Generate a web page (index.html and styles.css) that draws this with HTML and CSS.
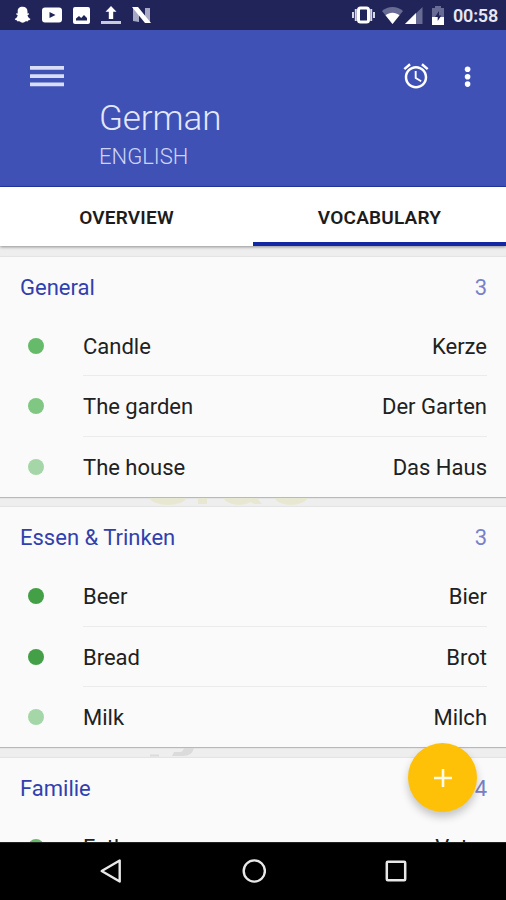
FILE: index.html
```html
<!DOCTYPE html>
<html lang="en">
<head>
<meta charset="utf-8">
<title>German vocabulary</title>
<link rel="stylesheet" href="styles.css">
</head>
<body>
<div class="screen">
  <header class="status">
    <div class="status-left">
      <svg width="17" height="18" viewBox="0 0 17 18"><path fill="#fff" d="M8.500.8c3.200 0 5 2 5 4.700v2l1.300-.2.300 1-1.600 1c.5 1.900 1.200 2.900 3 3.600-.3.900-1.300 1.100-2.200 1.300l-.5 1.200c-1.900-.3-2.400.1-3.500.9-1.100.6-2.300.6-3.400 0-1.100-.8-1.700-1.200-3.500-.9l-.5-1.200c-.9-.2-1.900-.4-2.200-1.300 1.800-.7 2.500-1.700 3-3.600l-1.600-1 .3-1 1.300.2v-2C3.500 2.800 5.300.8 8.500.8z"/></svg>
      <svg width="20" height="16" viewBox="0 0 20 16"><rect y=".5" width="20" height="15" rx="3" fill="#fff"/><path d="M7.500 5v6l6-3z" fill="#202458"/></svg>
      <svg width="17" height="17" viewBox="0 0 17 17"><rect width="17" height="17" rx="2" fill="#fff"/><path d="M3 13.500v-2L6 9l2.200 2L11 8l3 3v2.500z" fill="#202458"/></svg>
      <svg width="20" height="18" viewBox="0 0 20 18"><path d="M10 0l5.500 5.800h-3.300V13H7.800V5.800H4.500z" fill="#fff"/><path d="M0 15h20v3H0z" fill="#c8cade"/></svg>
      <svg width="19" height="16" viewBox="0 0 19 16"><path d="M1 1h6v14l-6-1zM13 1h5v14h-5z" fill="#a7a9c4"/><path d="M0 0h6l13 16h-6z" fill="#fff"/></svg>
    </div>
    <div class="status-right">
      <svg class="vibrate" width="23" height="18" viewBox="0 0 23 18"><rect x="6.500" y="2" width="10" height="14" rx="2" fill="none" stroke="#fff" stroke-width="3"/><path d="M3.800 3v12M19.200 3v12M1 6v6M22 6v6" stroke="#d7d8e6" stroke-width="2"/></svg>
      <svg class="wifi" width="21" height="17" viewBox="0 0 21 17"><path d="M0 4C6-1.300 15-1.300 21 4L10.500 17z" fill="#686b94"/><path d="M3.500 8.200c4-3.400 10-3.400 14 0L10.500 17z" fill="#fff"/></svg>
      <svg class="signal" width="18" height="17" viewBox="0 0 18 17"><path d="M0 17L17.500 0v17z" fill="#686b94"/><path d="M0 17L11 6v11z" fill="#fff"/></svg>
      <svg class="battery" width="12" height="19" viewBox="0 0 12 19"><path d="M3 0h6v2h3v9H0V2h3z" fill="#686b94"/><path d="M0 11h12v8H0z" fill="#fff"/><path d="M7 5L3 11h2.700v4L9.300 9.500H7z" fill="#202458"/></svg>
      <span class="clock">00:58</span>
    </div>
  </header>

  <div class="appbar">
    <div class="toolbar">
      <svg class="menu" width="34" height="22" viewBox="0 0 34 22"><path d="M0 2.800h34M0 11.100h34M0 19.300h34" stroke="#d9def8" stroke-width="3.800"/></svg>
      <svg class="alarm" width="30" height="30" viewBox="0 0 24 24"><path fill="#fff" d="M22 5.720l-4.600-3.860-1.290 1.530 4.600 3.860L22 5.720zM7.880 3.390L6.600 1.860 2 5.710l1.290 1.530 4.590-3.850zM12.500 8H11v6l4.750 2.850.75-1.230-4-2.370V8zM12 4c-4.970 0-9 4.030-9 9s4.020 9 9 9c4.970 0 9-4.030 9-9s-4.030-9-9-9zm0 16c-3.870 0-7-3.130-7-7s3.130-7 7-7 7 3.130 7 7-3.130 7-7 7z"/></svg>
      <svg class="more" width="8" height="22" viewBox="0 0 8 22"><g fill="#fff"><circle cx="3.600" cy="4.200" r="2.800"/><circle cx="3.600" cy="11.700" r="2.800"/><circle cx="3.600" cy="19.100" r="2.800"/></g></svg>
    </div>
    <h1>German</h1>
    <p class="subtitle">ENGLISH</p>
  </div>

  <nav class="tabs">
    <div class="tab">OVERVIEW</div>
    <div class="tab active">VOCABULARY</div>
  </nav>

  <main class="list">
    <section class="card">
      <h2><span>General</span><span class="count">3</span></h2>
      <div class="row"><i class="dot d3"></i><div class="pair"><span>Candle</span><span>Kerze</span></div></div>
      <div class="row"><i class="dot d2"></i><div class="pair"><span>The garden</span><span>Der Garten</span></div></div>
      <div class="row"><i class="dot d1"></i><div class="pair"><span>The house</span><span>Das Haus</span></div></div>
    </section>
    <div class="gap">
      <svg width="506" height="11" viewBox="0 0 506 11"><g fill="#e8e8d2"><path d="M149 1h38q-5 7-19 7t-19-7zM198 1h9v6h-9zM223 1h34l5 6h-8l-3-2q-5 3-11 3-12 0-17-7zM274 1h34q-5 7-17 7t-17-7z"/></g></svg>
    </div>
    <section class="card">
      <h2><span>Essen &amp; Trinken</span><span class="count">3</span></h2>
      <div class="row"><i class="dot d4"></i><div class="pair"><span>Beer</span><span>Bier</span></div></div>
      <div class="row"><i class="dot d4"></i><div class="pair"><span>Bread</span><span>Brot</span></div></div>
      <div class="row"><i class="dot d1"></i><div class="pair"><span>Milk</span><span>Milch</span></div></div>
    </section>
    <div class="gap">
      <svg width="506" height="11" viewBox="0 0 506 11"><path d="M184 1h10q-2 8-11 8h-11l2-4h6q3 0 4-4zM150 7.500h9v2h-9z" fill="#dbdbdb"/></svg>
    </div>
    <section class="card">
      <h2><span>Familie</span><span class="count">4</span></h2>
      <div class="row"><i class="dot d3"></i><div class="pair"><span>Father</span><span>Vater</span></div></div>
    </section>
  </main>

  <div class="fab"><svg width="18" height="18" viewBox="0 0 18 18"><path d="M9 0v18M0 9h18" stroke="#fffbe8" stroke-width="2.600"/></svg></div>

  <footer class="navbar">
    <svg width="24" height="26" viewBox="0 0 24 26"><path d="M20.700 2.500v21L2.700 13z" fill="none" stroke="#e8e8e8" stroke-width="2.400" stroke-linejoin="round"/></svg>
    <svg width="24" height="24" viewBox="0 0 24 24"><circle cx="12.300" cy="12" r="10.600" fill="none" stroke="#e8e8e8" stroke-width="2.400"/></svg>
    <svg width="24" height="24" viewBox="0 0 24 24"><rect x="2.800" y="2.800" width="18.400" height="18.400" rx="1" fill="none" stroke="#e8e8e8" stroke-width="2.500"/></svg>
  </footer>
</div>
</body>
</html>
```
FILE: styles.css
```css
* { box-sizing: border-box; }
body { margin: 0; font-family: Roboto, "Liberation Sans", sans-serif; }
svg { display: block; flex: none; }
h1, h2, p { margin: 0; font-weight: 400; }

.screen { position: relative; width: 506px; height: 900px; overflow: hidden; display: flex; flex-direction: column; background: #eee; }

.status { height: 30px; flex: none; display: flex; align-items: center; justify-content: space-between; padding: 0 9px 0 14px; background: #202458; }
.status-left, .status-right { display: flex; align-items: center; }
.status-left { gap: 11px; }
.wifi { margin-left: 7px; }
.signal { margin-left: 2px; }
.battery { margin-left: 9px; }
.clock { margin-left: 9px; width: 44px; padding-top: 1px; color: #e6e7f2; font-size: 18px; line-height: 30px; font-weight: 600; letter-spacing: -.2px; white-space: nowrap; }

.appbar { height: 157px; flex: none; background: #3f51b5; border-bottom: 1px solid #2438a8; color: #e3e7fc; }
.toolbar { height: 70px; display: flex; align-items: center; padding: 22px 34px 0 30px; }
.alarm { margin-left: auto; }
.more { margin-left: 33px; }
h1 { margin-left: 99px; font-size: 35px; line-height: 38px; font-weight: 300; letter-spacing: -.1px; }
.subtitle { margin: 6px 0 0 99px; font-size: 22px; line-height: 26px; font-weight: 300; color: #cdd5f7; }

.tabs { position: relative; height: 59px; flex: none; display: flex; background: #fff; box-shadow: 0 1px 3px rgba(0, 0, 0, .4); }
.tab { flex: 1; padding-top: 1px; text-align: center; font-size: 19px; line-height: 60px; font-weight: 600; letter-spacing: .2px; color: #1c1c1c; }
.active { border-bottom: 4px solid #1428a3; }

.list { flex: 1; min-height: 0; overflow: hidden; padding-top: 11px; }
.card { background: #fafafa; box-shadow: 0 1px 1px rgba(0, 0, 0, .22), 0 -1px 1px rgba(0, 0, 0, .04); }
h2 { height: 59px; display: flex; justify-content: space-between; padding: 1px 19px 0 20px; font-size: 22px; line-height: 60px; color: #3140ae; }
.count { color: #7781cb; }
.row { height: 60.300px; display: flex; align-items: center; padding: 0 19px 0 28px; }
.dot { width: 16px; height: 16px; margin-right: 39px; border-radius: 50%; flex: none; }
.d1 { background: #a5d6a7; }
.d2 { background: #81c784; }
.d3 { background: #66bb6a; }
.d4 { background: #43a047; }
.pair { flex: 1; height: 100%; display: flex; justify-content: space-between; padding-top: 1px; border-bottom: 1px solid #ebebeb; font-size: 22px; line-height: 60px; color: #212121; }
.row:last-child .pair { border-bottom: 0; }
.gap { height: 10.400px; }

.fab { position: absolute; left: 408px; top: 743px; width: 69px; height: 69px; border-radius: 50%; display: flex; align-items: center; justify-content: center; background: #ffc107; box-shadow: 0 5px 8px rgba(0, 0, 0, .22); }

.navbar { height: 58px; flex: none; display: flex; align-items: center; justify-content: center; gap: 118.500px; padding: 0 0 2px 1px; background: #000; border-top: 1px solid #222; }
```
